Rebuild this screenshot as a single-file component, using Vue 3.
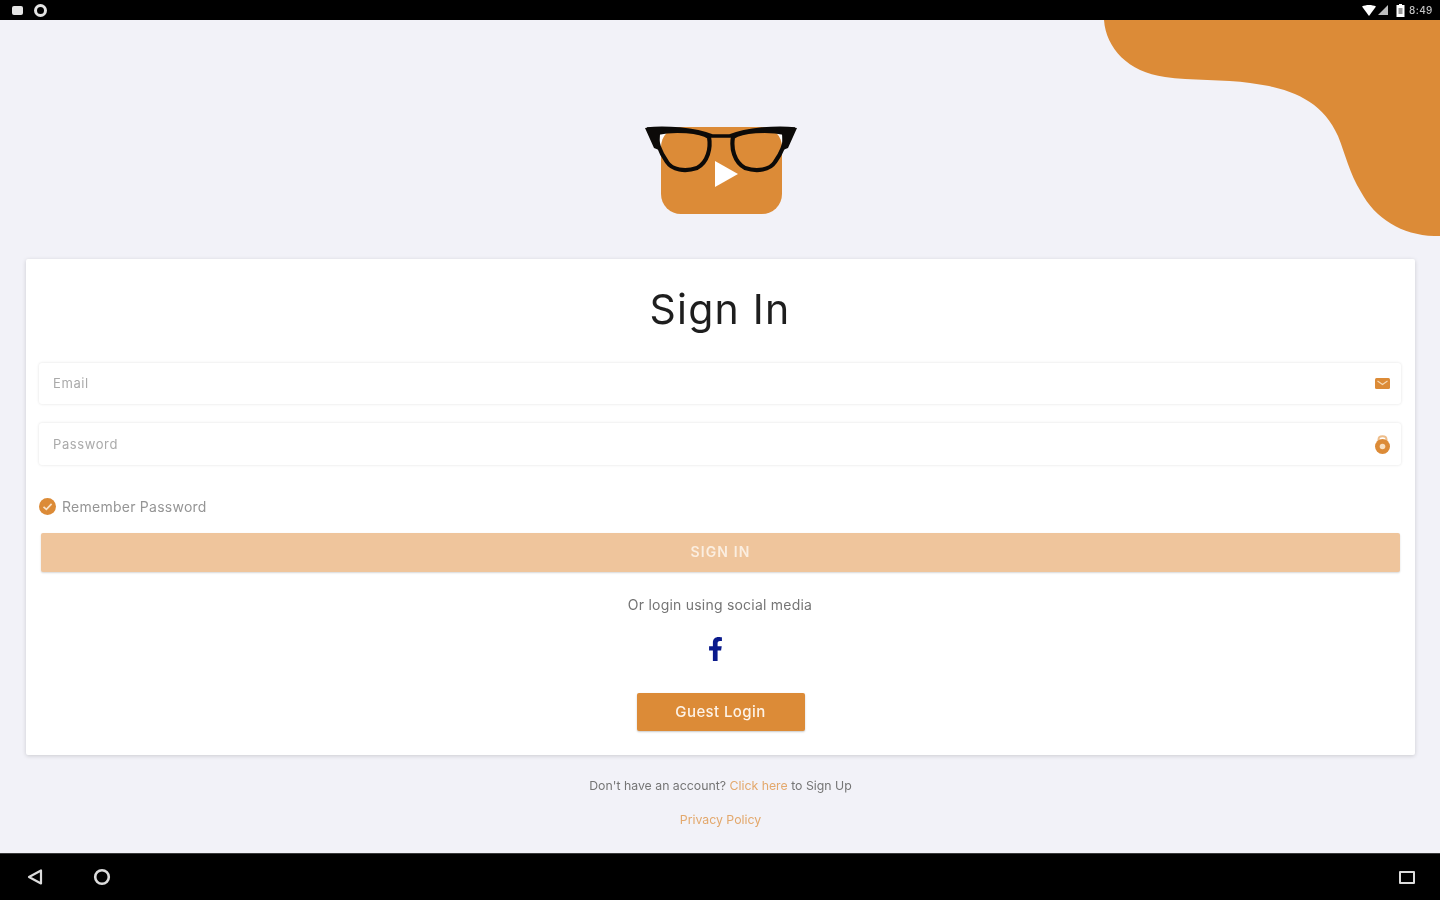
<script setup>
const email = ''
const password = ''
</script>

<template>
  <div class="screen">
    <header class="status">
      <div class="status-group">
        <span class="note-icon"></span>
        <span class="ring-icon"></span>
      </div>
      <div class="status-group right">
        <svg class="wifi" viewBox="0 0 14 11"><path d="M0 1.5 C4 -0.5 10 -0.5 14 1.5 L7 11Z" fill="#fff"/></svg>
        <svg class="signal" viewBox="0 0 10 10"><path d="M10 0V10H0Z" fill="#bdbdbd"/></svg>
        <svg class="battery" viewBox="0 0 9 13"><path d="M3 0H6V1H8.5V13H.5V1H3Z" fill="#fff"/><path d="M2.5 4H6.5V10H2.5Z" fill="#9a9a9a"/></svg>
        <span class="time">8:49</span>
      </div>
    </header>

    <svg class="blob" viewBox="1104 20 336 216" aria-hidden="true">
      <path d="M1104 20C1106 48 1128 72 1165 77C1190 81 1225 79 1250 83C1290 88 1322 100 1338 136C1346 156 1349 172 1361 192C1376 220 1405 237 1440 236V20Z" fill="#dc8b37"/>
    </svg>

    <main class="main">
      <svg class="logo" viewBox="641 120 160 100" role="img" aria-label="Logo">
        <path d="M657 133C675 128 700 130 709 137C711 148 708 162 697 168C685 172 672 170 667 162C660 152 656 143 657 133Z" fill="#fff"/>
        <path d="M785 133C767 128 742 130 733 137C731 148 734 162 745 168C757 172 770 170 775 162C782 152 786 143 785 133Z" fill="#fff"/>
        <rect x="661" y="127" width="121" height="87" rx="20" fill="#dc8b37"/>
        <path d="M715 161L738 174L715 187Z" fill="#fff"/>
        <g fill="none" stroke="#0c0a08" stroke-width="4.2">
          <path d="M657 133C675 129 700 131 709 137C711 148 708 162 697 168C685 172 672 170 667 162C660 152 656 143 657 133Z"/>
          <path d="M785 133C767 129 742 131 733 137C731 148 734 162 745 168C757 172 770 170 775 162C782 152 786 143 785 133Z"/>
          <path d="M647 129C665 127 695 129 712 136H730C747 129 777 127 795 129" stroke-width="3.6"/>
        </g>
        <path d="M645 128C652 127 660 127 666 129L660 134L659 150L654 148Z" fill="#0c0a08"/>
        <path d="M797 128C790 127 782 127 776 129L782 134L783 150L788 148Z" fill="#0c0a08"/>
      </svg>

      <section class="card">
        <h1 class="title">Sign In</h1>

        <label class="field">
          <input :value="email" class="input" type="text" placeholder="Email" />
          <svg class="field-icon" viewBox="0 0 15 11">
            <rect width="15" height="11" rx="1.5" fill="#dc8b37"/>
            <path d="M2.5 3L7.5 6.5L12.5 3" fill="none" stroke="#f6d9b4" stroke-width="1.2"/>
          </svg>
        </label>

        <label class="field second">
          <input :value="password" class="input" type="password" placeholder="Password" />
          <svg class="field-icon lock" viewBox="0 0 15 20">
            <path d="M3.5 8V5.5C3.5 1 11.5 1 11.5 5.5V8" fill="none" stroke="#eebd8a" stroke-width="2"/>
            <circle cx="7.5" cy="12.5" r="7.5" fill="#dc8b37"/>
            <circle cx="7.5" cy="12.5" r="2.8" fill="#f8dfc1"/>
          </svg>
        </label>

        <div class="remember">
          <svg class="check" viewBox="0 0 17 17">
            <circle cx="8.5" cy="8.5" r="8.5" fill="#dc8b37"/>
            <path d="M4.5 8.8L7.4 11.4L12.6 5.8" fill="none" stroke="#f8e2c8" stroke-width="1.7"/>
          </svg>
          <span>Remember Password</span>
        </div>

        <button class="signin" type="button">SIGN IN</button>

        <p class="social-text">Or login using social media</p>

        <div class="social">
          <svg class="fb" viewBox="0 0 320 512" role="img" aria-label="Facebook">
            <path d="M279.14 288l14.22-92.66h-88.91v-60.13c0-25.35 12.42-50.06 52.24-50.06h40.42V6.26S260.43 0 225.36 0c-73.22 0-121.08 44.38-121.08 124.72v70.62H22.89V288h81.39v224h100.17V288z" fill="#0a1a8c"/>
          </svg>
        </div>

        <div class="guest-row">
          <button class="guest" type="button">Guest Login</button>
        </div>
      </section>

      <p class="foot first">Don't have an account? <a class="link">Click here</a> to Sign Up</p>
      <p class="foot second-foot"><a class="link">Privacy Policy</a></p>
    </main>

    <footer class="nav">
      <svg class="nav-icon" viewBox="0 0 18 18"><path d="M15 2.5V15.5L3 9Z" fill="none" stroke="#dcdcdc" stroke-width="2.2" stroke-linejoin="round"/></svg>
      <svg class="nav-icon home" viewBox="0 0 18 18"><circle cx="9" cy="9" r="6.8" fill="none" stroke="#dcdcdc" stroke-width="2.6"/></svg>
      <span class="nav-spacer"></span>
      <span class="recent"></span>
    </footer>
  </div>
</template>

<style>
html, body { margin: 0; background: #f2f2f8; }
</style>

<style scoped>
.screen {
  position: relative;
  width: 1440px;
  height: 900px;
  overflow: hidden;
  display: flex;
  flex-direction: column;
  background: #f2f2f8;
  font-family: Inter, "Liberation Sans", sans-serif;
  filter: blur(.7px);
}
.status {
  height: 20px;
  flex: none;
  background: #000;
  display: flex;
  align-items: center;
  justify-content: space-between;
  padding: 0 6px 0 12px;
}
.status-group { display: flex; align-items: center; gap: 11px; }
.status-group.right { gap: 2px; }
.note-icon { width: 11px; height: 9px; background: #e4e4e4; border-radius: 2px; }
.ring-icon { width: 7px; height: 7px; border: 3px solid #e4e4e4; border-radius: 50%; }
.wifi { width: 14px; height: 11px; }
.signal { width: 10px; height: 10px; }
.battery { width: 9px; height: 13px; margin-left: 6px; }
.time { margin-left: 2px; color: #c4c4c4; font-size: 10px; width: 25px; font-weight: 500; letter-spacing: .4px; }
.blob {
  position: absolute;
  top: 20px;
  right: 0;
  width: 336px;
  height: 216px;
}
.main {
  flex: 1;
  display: flex;
  flex-direction: column;
  position: relative;
  padding: 100px 25px 0 26px;
}
.logo {
  display: block;
  width: 160px;
  height: 100px;
  flex: none;
  margin: 0 auto 39px;
  position: relative;
  left: 0.5px;
}
.card {
  background: #fff;
  height: 496px;
  box-sizing: border-box;
  padding: 25px 14px 24px 13px;
  border-radius: 2px;
  box-shadow: 0 1px 4px rgba(0, 0, 0, .16);
}
.title {
  margin: 0 0 29px;
  height: 50px;
  line-height: 50px;
  text-align: center;
  font-size: 41px;
  font-weight: 400;
  letter-spacing: 1.2px;
  color: #1e1e1e;
}
.field {
  display: flex;
  align-items: center;
  height: 41px;
  padding: 0 11px 0 14px;
  border-radius: 3px;
  background: #fff;
  box-shadow: 0 0 3px rgba(0, 0, 0, .12);
}
.field.second { height: 42px; margin-top: 19px; }
.input {
  flex: 1;
  min-width: 0;
  border: 0;
  outline: 0;
  padding: 0 0 1px;
  background: transparent;
  font: 400 13px Inter, "Liberation Sans", sans-serif;
  letter-spacing: .6px;
  color: #555;
}
.input::placeholder { color: #aaa; opacity: 1; }
.field-icon { width: 15px; height: 11px; flex: none; }
.field-icon.lock { height: 20px; }
.remember {
  display: flex;
  align-items: center;
  gap: 6px;
  height: 20px;
  margin-top: 31px;
  font-size: 14px;
  letter-spacing: .25px;
  color: #959595;
}
.check { width: 17px; height: 17px; flex: none; }
.signin {
  display: block;
  width: calc(100% - 3px);
  height: 39px;
  margin: 17px 0 0 2px;
  padding: 0 0 2px;
  border: 0;
  border-radius: 2px;
  background: #efc59c;
  color: #fbeee0;
  font: 600 14px Inter, "Liberation Sans", sans-serif;
  letter-spacing: 1.1px;
  box-shadow: 0 1px 2px rgba(0, 0, 0, .16);
}
.social-text {
  margin: 23px 0 0;
  height: 20px;
  line-height: 20px;
  text-align: center;
  font-size: 14px;
  letter-spacing: .22px;
  color: #757575;
}
.social {
  display: flex;
  justify-content: center;
  height: 24px;
  margin-top: 22px;
  padding-right: 9px;
}
.fb { width: 15px; height: 24px; }
.guest-row { display: flex; justify-content: center; margin-top: 32px; padding-left: 1px; }
.guest {
  width: 168px;
  height: 38px;
  padding: 0 0 2px;
  border: 0;
  border-radius: 2px;
  background: #dc8b37;
  color: #fdf3e8;
  font: 500 15px Inter, "Liberation Sans", sans-serif;
  letter-spacing: .4px;
  box-shadow: 0 1px 2px rgba(0, 0, 0, .22);
}
.foot {
  margin: 0;
  height: 20px;
  line-height: 20px;
  text-align: center;
  font-size: 12.3px;
  color: #757575;
}
.foot.first { margin-top: 20.5px; }
.foot.second-foot { margin-top: 14px; }
.link { color: #e3a86c; }
.nav {
  height: 47px;
  flex: none;
  background: #000;
  display: flex;
  align-items: center;
  padding: 0 25px 0 26px;
  border-top: 1px solid #3a3a3a;
  box-sizing: border-box;
}
.nav-icon { width: 18px; height: 18px; }
.home { margin-left: 49px; }
.nav-spacer { flex: 1; }
.recent {
  width: 12px;
  height: 9px;
  border: 2.5px solid #dcdcdc;
  border-radius: 1px;
}
</style>
